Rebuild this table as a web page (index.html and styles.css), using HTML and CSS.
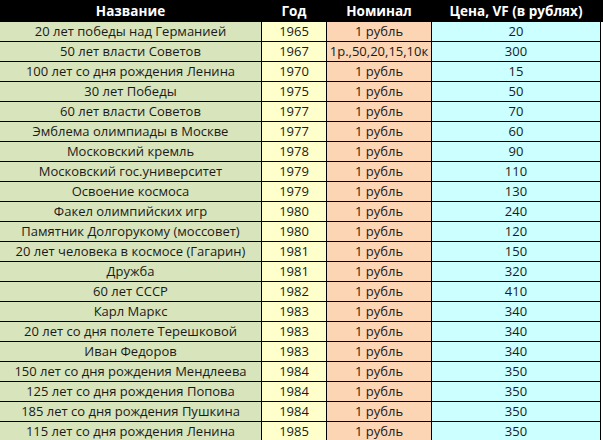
FILE: index.html
```html
<!DOCTYPE html>
<html lang="ru">
<head>
<meta charset="utf-8">
<title>Монеты</title>
<link rel="stylesheet" href="styles.css">
</head>
<body>
<table class="coins">
  <colgroup>
    <col class="c-name">
    <col class="c-year">
    <col class="c-nom">
    <col class="c-price">
  </colgroup>
  <thead>
    <tr><th>Название</th><th>Год</th><th>Номинал</th><th>Цена, VF (в рублях)</th></tr>
  </thead>
  <tbody>
    <tr><td class="name">20 лет победы над Германией</td><td class="year">1965</td><td class="nom">1 рубль</td><td class="price">20</td></tr>
    <tr><td class="name">50 лет власти Советов</td><td class="year">1967</td><td class="nom">1р.,50,20,15,10к</td><td class="price">300</td></tr>
    <tr><td class="name">100 лет со дня рождения Ленина</td><td class="year">1970</td><td class="nom">1 рубль</td><td class="price">15</td></tr>
    <tr><td class="name">30 лет Победы</td><td class="year">1975</td><td class="nom">1 рубль</td><td class="price">50</td></tr>
    <tr><td class="name">60 лет власти Советов</td><td class="year">1977</td><td class="nom">1 рубль</td><td class="price">70</td></tr>
    <tr><td class="name">Эмблема олимпиады в Москве</td><td class="year">1977</td><td class="nom">1 рубль</td><td class="price">60</td></tr>
    <tr><td class="name">Московский кремль</td><td class="year">1978</td><td class="nom">1 рубль</td><td class="price">90</td></tr>
    <tr><td class="name">Московский гос.университет</td><td class="year">1979</td><td class="nom">1 рубль</td><td class="price">110</td></tr>
    <tr><td class="name">Освоение космоса</td><td class="year">1979</td><td class="nom">1 рубль</td><td class="price">130</td></tr>
    <tr><td class="name">Факел олимпийских игр</td><td class="year">1980</td><td class="nom">1 рубль</td><td class="price">240</td></tr>
    <tr><td class="name">Памятник Долгорукому (моссовет)</td><td class="year">1980</td><td class="nom">1 рубль</td><td class="price">120</td></tr>
    <tr><td class="name">20 лет человека в космосе (Гагарин)</td><td class="year">1981</td><td class="nom">1 рубль</td><td class="price">150</td></tr>
    <tr><td class="name">Дружба</td><td class="year">1981</td><td class="nom">1 рубль</td><td class="price">320</td></tr>
    <tr><td class="name">60 лет СССР</td><td class="year">1982</td><td class="nom">1 рубль</td><td class="price">410</td></tr>
    <tr><td class="name">Карл Маркс</td><td class="year">1983</td><td class="nom">1 рубль</td><td class="price">340</td></tr>
    <tr><td class="name">20 лет со дня полете Терешковой</td><td class="year">1983</td><td class="nom">1 рубль</td><td class="price">340</td></tr>
    <tr><td class="name">Иван Федоров</td><td class="year">1983</td><td class="nom">1 рубль</td><td class="price">340</td></tr>
    <tr><td class="name">150 лет со дня рождения Мендлеева</td><td class="year">1984</td><td class="nom">1 рубль</td><td class="price">350</td></tr>
    <tr><td class="name">125 лет со дня рождения Попова</td><td class="year">1984</td><td class="nom">1 рубль</td><td class="price">350</td></tr>
    <tr><td class="name">185 лет со дня рождения Пушкина</td><td class="year">1984</td><td class="nom">1 рубль</td><td class="price">350</td></tr>
    <tr><td class="name">115 лет со дня рождения Ленина</td><td class="year">1985</td><td class="nom">1 рубль</td><td class="price">350</td></tr>
  </tbody>
</table>
</body>
</html>
```

FILE: styles.css
```css
html, body {
  margin: 0;
  padding: 0;
  background: #ffffff;
}

.coins {
  border-collapse: separate;
  border-spacing: 0;
  table-layout: fixed;
  width: 601px;
  font-family: "Open Sans", "Noto Sans", sans-serif;
  font-size: 13px;
  color: #1a1a1a;
}

.c-name { width: 262px; }
.c-year { width: 65px; }
.c-nom { width: 105px; }
.c-price { width: 169px; }

.coins thead th {
  background: #000000;
  color: #ffffff;
  font-size: 13.5px;
  font-weight: 700;
  height: 21px;
  padding: 0 0 1px 0;
  line-height: 20px;
  text-align: center;
  white-space: nowrap;
  overflow: hidden;
  border-right: 1px solid #000000;
}

.coins th:last-child {
  box-shadow: 2px 0 0 #000000;
}

.coins td {
  height: 19px;
  padding: 0;
  line-height: 19px;
  text-align: center;
  white-space: nowrap;
  overflow: hidden;
  border-right: 1px solid #000000;
  border-bottom: 1px solid #000000;
}

.name { background: #d8e4bc; }
.year { background: #ffffcc; }
.nom { background: #fcd5b4; }
.price { background: #ccffff; }
```
